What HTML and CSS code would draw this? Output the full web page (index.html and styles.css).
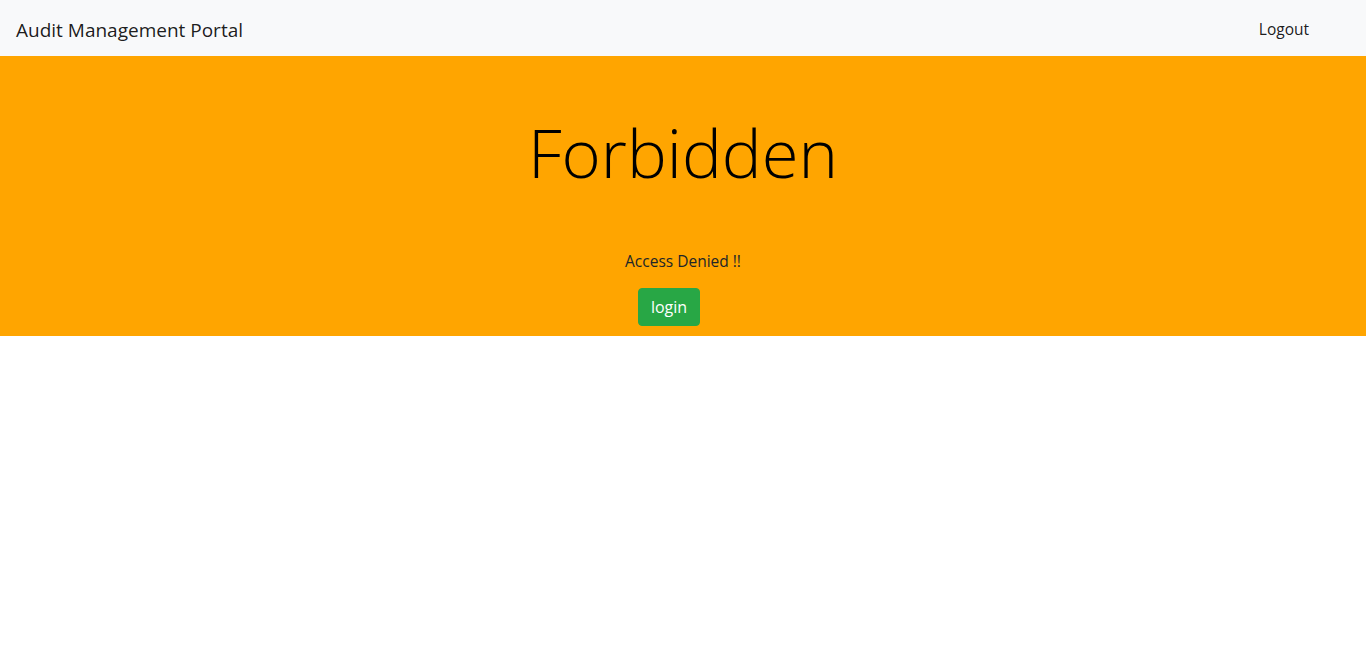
FILE: index.html
```html
<!DOCTYPE html>
<html>
<head>
<meta charset="utf-8">
<link rel="stylesheet" href="styles.css">
</head>
<body>
<nav class="navbar">
  <span class="brand">Audit Management Portal</span>
  <a class="nav-link" href="#">Logout</a>
</nav>
<section class="banner">
  <h1 class="title">Forbidden</h1>
  <p class="message">Access Denied !!</p>
  <div class="actions">
    <button class="btn-login">login</button>
  </div>
</section>
</body>
</html>
```
FILE: styles.css
```css
html, body {
  margin: 0;
  padding: 0;
  background: #fff;
  font-family: "Open Sans", "Noto Sans", sans-serif;
  color: #212529;
}
.navbar {
  height: 56px;
  box-sizing: border-box;
  background: #f8f9fa;
  display: flex;
  align-items: center;
  justify-content: space-between;
  padding: 0 57px 0 16px;
}
.brand {
  font-size: 19px;
  color: rgba(0,0,0,.9);
  margin-top: 4px;
}
.nav-link {
  font-size: 15.5px;
  color: rgba(0,0,0,.9);
  text-decoration: none;
  margin-top: 2px;
}
.banner {
  background: #ffa500;
  height: 280px;
  box-sizing: border-box;
  display: flex;
  flex-direction: column;
  align-items: center;
  padding-top: 48px;
}
.title {
  margin: 0;
  font-size: 67px;
  font-weight: 300;
  line-height: 96px;
  color: #000;
}
.message {
  margin: 49px 0 0;
  font-size: 15.5px;
  line-height: 24px;
}
.actions {
  margin-top: 15px;
  display: flex;
  justify-content: center;
  padding-right: 28px;
}
.btn-login {
  font-family: inherit;
  font-size: 16px;
  color: #fff;
  background: #28a745;
  border: 1px solid #28a745;
  border-radius: 4px;
  height: 38px;
  width: 62px;
  padding: 0;
}
```
